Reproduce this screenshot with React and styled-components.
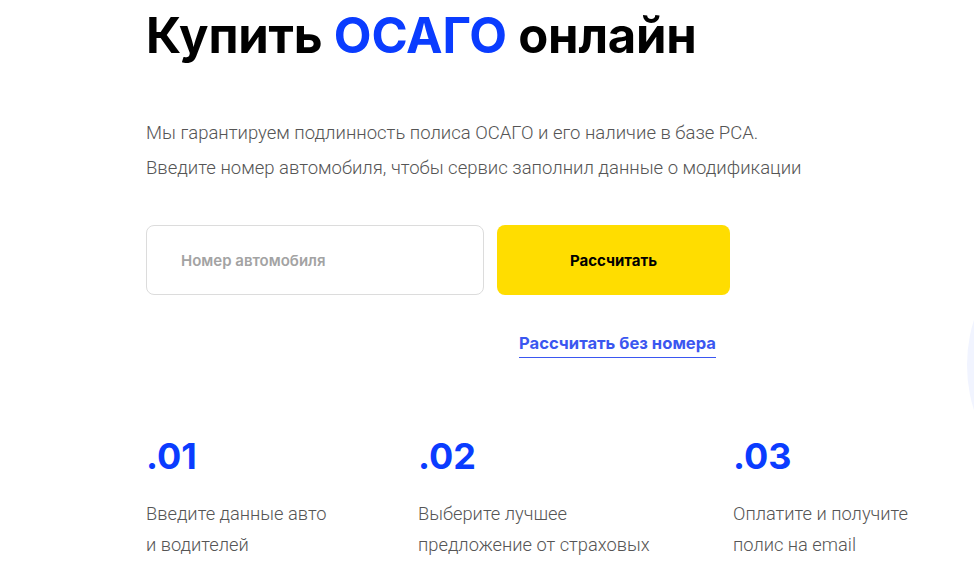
import styled, { createGlobalStyle } from 'styled-components'

const Global = createGlobalStyle`
  html, body {
    margin: 0;
    padding: 0;
    background: #fff;
    overflow: hidden;
  }
  * { box-sizing: border-box; }
`

const Page = styled.div`
  position: relative;
  width: 974px;
  height: 568px;
  overflow: hidden;
  padding: 6px 0 0 146px;
  font-family: 'Lato', 'Inter', sans-serif;
`

const Blob = styled.div`
  position: absolute;
  left: 967px;
  top: 215px;
  width: 300px;
  height: 300px;
  border-radius: 50%;
  background: #f1f4ff;
`

const Title = styled.h1`
  margin: 0;
  font-family: 'Inter', sans-serif;
  font-weight: 700;
  font-size: 49px;
  line-height: 60px;
  letter-spacing: -0.2px;
  color: #000;
`

const Accent = styled.span`
  color: #0a3cff;
`

const Lead = styled.div`
  margin-top: 50px;
  display: flex;
  flex-direction: column;
`

const LeadLine = styled.p`
  margin: 0;
  font-family: 'Roboto', sans-serif;
  font-weight: 300;
  font-size: 18.5px;
  line-height: 35px;
  color: #555;
`

const Form = styled.div`
  margin-top: 39px;
  display: flex;
  gap: 13px;
`

const Field = styled.input`
  width: 338px;
  height: 70px;
  border: 1px solid #dcdcdc;
  border-radius: 8px;
  padding: 0 34px;
  font-family: 'Inter', sans-serif;
  font-weight: 600;
  font-size: 15px;
  color: #222;
  outline: none;

  &::placeholder {
    color: #a3a3a3;
  }
`

const Submit = styled.button`
  width: 233px;
  height: 70px;
  border: none;
  border-radius: 8px;
  background: #ffdd00;
  font-family: 'Inter', sans-serif;
  font-weight: 700;
  font-size: 15px;
  color: #000;
  cursor: pointer;
`

const LinkRow = styled.div`
  width: 584px;
  margin-top: 38px;
  display: flex;
  justify-content: flex-end;
  padding-right: 14px;
`

const Link = styled.a`
  font-family: 'Inter', sans-serif;
  font-weight: 700;
  font-size: 16.6px;
  line-height: 20px;
  color: #3b57f0;
  text-decoration: none;
  padding-bottom: 4px;
  border-bottom: 1.5px solid #3b57f0;
  cursor: pointer;
`

const Steps = styled.div`
  margin-top: 76px;
  display: grid;
  grid-template-columns: 272px 315px 1fr;
`

const Step = styled.div`
  display: flex;
  flex-direction: column;
`

const Num = styled.div`
  font-family: 'Inter', sans-serif;
  font-weight: 700;
  font-size: 36px;
  line-height: 44px;
  color: #0a3cff;
`

const StepText = styled.p`
  margin: 20px 0 0;
  font-family: 'Roboto', sans-serif;
  font-weight: 300;
  font-size: 18.3px;
  line-height: 31px;
  color: #555;
`

const steps = [
  { n: '.01', text: ['Введите данные авто', 'и водителей'] },
  { n: '.02', text: ['Выберите лучшее', 'предложение от страховых'] },
  { n: '.03', text: ['Оплатите и получите', 'полис на email'] },
]

export default function App() {
  return (
    <Page>
      <Global />
      <Blob />
      <Title>
        Купить <Accent>ОСАГО</Accent> онлайн
      </Title>
      <Lead>
        <LeadLine>Мы гарантируем подлинность полиса ОСАГО и его наличие в базе РСА.</LeadLine>
        <LeadLine>Введите номер автомобиля, чтобы сервис заполнил данные о модификации</LeadLine>
      </Lead>
      <Form>
        <Field placeholder="Номер автомобиля" />
        <Submit>Рассчитать</Submit>
      </Form>
      <LinkRow>
        <Link>Рассчитать без номера</Link>
      </LinkRow>
      <Steps>
        {steps.map((s) => (
          <Step key={s.n}>
            <Num>{s.n}</Num>
            <StepText>
              {s.text[0]}
              <br />
              {s.text[1]}
            </StepText>
          </Step>
        ))}
      </Steps>
    </Page>
  )
}
